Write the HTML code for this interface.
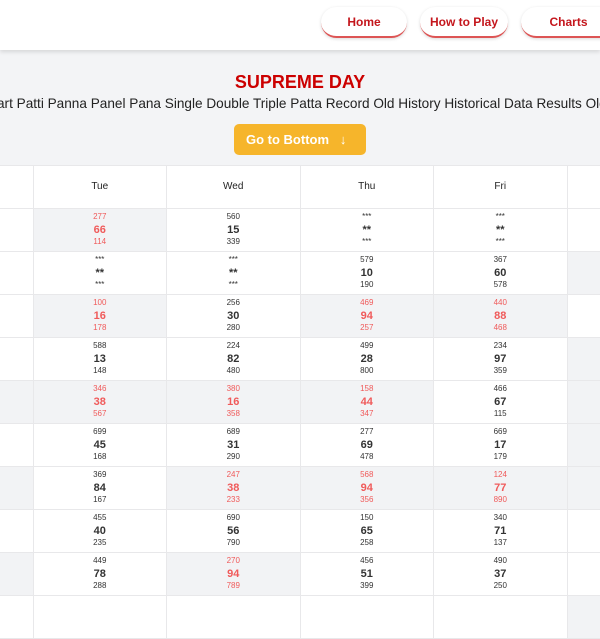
<!DOCTYPE html>
<html><head><style>
*{margin:0;padding:0;box-sizing:border-box}
body{width:600px;height:600px;overflow:hidden;background:#f3f4f6;font-family:"Liberation Sans",sans-serif;position:relative}
.top{position:absolute;left:0;top:0;width:600px;height:50px;background:#fff;box-shadow:0 2px 4px rgba(0,0,0,.12)}
.btn{position:absolute;top:7px;height:31px;border-radius:16px;background:#fff;border-bottom:2px solid #d55;box-shadow:0 1px 3px rgba(0,0,0,.15);color:#c4161c;font-weight:bold;font-size:12px;text-align:center;line-height:30px}
h1{position:absolute;top:72px;width:600px;text-align:center;color:#c00;font-size:18px;font-weight:bold}
.sub{position:absolute;top:96px;left:-3px;white-space:nowrap;font-size:13.6px;color:#222}
.go{position:absolute;left:234px;top:124px;width:132px;height:31px;background:#f6b52b;border-radius:5px;color:#fff;font-weight:bold;font-size:13px;line-height:31px;padding-left:12px}
table{position:absolute;top:165px;left:-101px;width:801px;table-layout:fixed;border-collapse:collapse;background:#fff}
td{width:133.5px;height:43px;border:1px solid #e8e8ea;text-align:center;font-size:8px;color:#333;line-height:12.5px;vertical-align:middle}
td b{font-size:11px;display:block}
tr.h td{font-size:10px;color:#222}
.g{background:#f2f3f5}
.r{color:#f05a5a}
</style></head><body>
<div class="top">
<div class="btn" style="left:321px;width:86px">Home</div>
<div class="btn" style="left:420px;width:88px">How to Play</div>
<div class="btn" style="left:521px;width:95px">Charts</div>
</div>
<h1>SUPREME DAY</h1>
<div class="sub">art Patti Panna Panel Pana Single Double Triple Patta Record Old History Historical Data Results Old</div>
<div class="go">Go to Bottom &nbsp; ↓</div>
<table>
<colgroup><col style="width:133.5px"><col style="width:133.5px"><col style="width:133.5px"><col style="width:133.5px"><col style="width:133.5px"><col style="width:133.5px"></colgroup>
<tr class="h"><td></td><td>Tue</td><td>Wed</td><td>Thu</td><td>Fri</td><td></td></tr>
<tr><td></td><td class="g r">277<b>66</b>114</td><td>560<b>15</b>339</td><td>***<b>**</b>***</td><td>***<b>**</b>***</td><td></td></tr>
<tr><td></td><td>***<b>**</b>***</td><td>***<b>**</b>***</td><td>579<b>10</b>190</td><td>367<b>60</b>578</td><td class="g"></td></tr>
<tr><td></td><td class="g r">100<b>16</b>178</td><td>256<b>30</b>280</td><td class="g r">469<b>94</b>257</td><td class="g r">440<b>88</b>468</td><td></td></tr>
<tr><td></td><td>588<b>13</b>148</td><td>224<b>82</b>480</td><td>499<b>28</b>800</td><td>234<b>97</b>359</td><td class="g"></td></tr>
<tr><td class="g"></td><td class="g r">346<b>38</b>567</td><td class="g r">380<b>16</b>358</td><td class="g r">158<b>44</b>347</td><td>466<b>67</b>115</td><td class="g"></td></tr>
<tr><td></td><td>699<b>45</b>168</td><td>689<b>31</b>290</td><td>277<b>69</b>478</td><td>669<b>17</b>179</td><td class="g"></td></tr>
<tr><td class="g"></td><td>369<b>84</b>167</td><td class="g r">247<b>38</b>233</td><td class="g r">568<b>94</b>356</td><td class="g r">124<b>77</b>890</td><td class="g"></td></tr>
<tr><td></td><td>455<b>40</b>235</td><td>690<b>56</b>790</td><td>150<b>65</b>258</td><td>340<b>71</b>137</td><td></td></tr>
<tr><td class="g"></td><td>449<b>78</b>288</td><td class="g r">270<b>94</b>789</td><td>456<b>51</b>399</td><td>490<b>37</b>250</td><td></td></tr>
<tr><td></td><td></td><td></td><td></td><td></td><td class="g"></td></tr>
</table>
</body></html>
